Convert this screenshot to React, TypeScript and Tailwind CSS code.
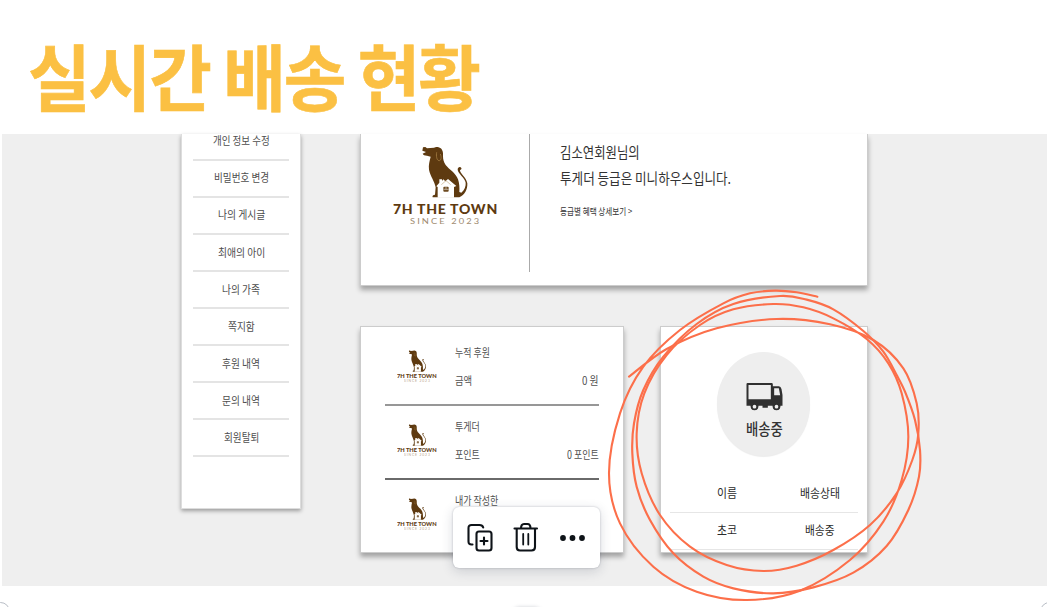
import { useLayoutEffect, useRef, useState } from 'react';

const KR = "font-['Noto_Sans_CJK_KR','Noto_Sans',sans-serif]";

/* Single line of text condensed or widened to an exact width. */
function Fit({ w, className = '', children }: { w: number; className?: string; children: string }) {
  const ref = useRef<HTMLSpanElement>(null);
  const [scale, setScale] = useState(1);
  useLayoutEffect(() => {
    if (ref.current) setScale(w / ref.current.offsetWidth);
  }, [w]);
  return (
    <span className={`block shrink-0 whitespace-nowrap ${className}`} style={{ width: w }}>
      <span ref={ref} className="inline-block origin-left" style={{ transform: `scaleX(${scale})` }}>
        {children}
      </span>
    </span>
  );
}

type Pt = [number, number];

function smooth(p: Pt[]) {
  let d = `M${p[0][0]} ${p[0][1]}`;
  for (let i = 0; i < p.length - 1; i++) {
    const a = p[i - 1] || p[i];
    const b = p[i];
    const c = p[i + 1];
    const e = p[i + 2] || c;
    d += `C${b[0] + (c[0] - a[0]) / 6} ${b[1] + (c[1] - a[1]) / 6} ${c[0] - (e[0] - b[0]) / 6} ${c[1] - (e[1] - b[1]) / 6} ${c[0]} ${c[1]}`;
  }
  return d;
}

const outer: Pt[] = [
  [652, 50], [590, 37], [525, 32], [450, 40], [370, 70], [240, 150], [130, 260], [60, 400], [27, 580], [60, 730],
  [160, 860], [290, 935], [440, 960], [600, 932], [750, 840], [850, 725], [905, 600], [925, 470], [905, 340],
  [865, 250], [800, 177], [700, 115], [610, 82], [520, 72],
];
const inner: Pt[] = [
  [87, 290], [200, 207], [350, 145], [530, 117], [690, 133], [820, 180], [910, 265], [950, 370], [955, 460],
  [937, 540], [890, 640], [810, 735], [700, 810], [590, 857], [490, 873], [380, 855], [270, 800], [180, 705],
  [125, 580], [110, 460], [133, 340], [200, 225], [300, 135], [400, 88], [520, 72],
];
const middle: Pt[] = [
  [890, 285], [850, 215], [790, 153], [700, 88], [620, 59], [540, 48], [400, 72], [290, 132], [190, 230],
  [130, 330], [102, 430], [97, 520], [110, 620], [150, 720], [220, 820], [310, 890], [400, 925], [520, 940],
  [640, 922], [760, 878], [860, 798], [925, 690], [957, 590], [960, 510], [945, 420], [915, 335], [890, 285],
];

function Scribble() {
  return (
    <svg className="absolute left-[600px] top-[280px]" width="330" height="327" viewBox="0 0 990 981" fill="none" stroke="#fc6f4a" strokeLinecap="round" strokeLinejoin="round">
      <path d={smooth([...outer, ...inner.slice(0, -1).reverse()])} strokeWidth="6.3" />
      <path d={smooth(middle)} strokeWidth="6.500" />
    </svg>
  );
}

function Dog({ className }: { className: string }) {
  return (
    <svg className={className} viewBox="120 48 150 156" preserveAspectRatio="none">
      <path
        d="M129 52 136 51 141 55 162 53C168 50 178 51 184 56C188 61 190 68 189 78C189 88 191 96 197 105C207 118 227 128 234 148C238 160 239 174 238 186L244 188C254 180 258 168 257 158C255 143 234 131 233 119C233 111 241 109 244 114C246 119 240 118 240 122C242 132 260 143 262 160C263 179 254 195 238 202L158 202C156 197 160 194 165 194L167 172C164 154 151 139 147 119C145 105 149 91 152 80L141 77C134 77 129 74 128 71L138 66 127 62Z"
        fill="#5e3a10"
      />
      <path d="M170 67C168 77 170 91 177 92C184 92 185 81 181 72" fill="none" stroke="#a47c42" strokeWidth="2.500" />
      <path d="M173 203V171L169 169 178 158V148H186V153L190 148 196 154 204 147 229 168 222 171V203Z" fill="#fff" />
      <path d="M184 164 198 152 212 164" fill="none" stroke="#c3aa85" strokeWidth="2" />
      <rect x="190" y="170" width="16" height="15" rx="3" fill="#6d4a20" />
      <path d="M198 171V178M191 178H206" stroke="#fff" strokeWidth="1.500" />
    </svg>
  );
}

const menu: [string, number][] = [
  ['개인 정보 수정', 57], ['비밀번호 변경', 55], ['나의 게시글', 47], ['최애의 아이', 47], ['나의 가족', 38],
  ['쪽지함', 27], ['후원 내역', 38], ['문의 내역', 38], ['회원탈퇴', 35],
];

const rows: { a: string; aw: number; b: string; bw: number; v: string; vw: number; line: string }[] = [
  { a: '누적 후원', aw: 35, b: '금액', bw: 17, v: '0 원', vw: 17, line: 'border-[#979797]' },
  { a: '투게더', aw: 25, b: '포인트', bw: 25, v: '0 포인트', vw: 32, line: 'border-[#6a6a6a]' },
  { a: '내가 작성한', aw: 43, b: '게시글', bw: 25, v: '0 개', vw: 17, line: 'border-transparent' },
];

function Truck() {
  return (
    <svg width="37" height="28" viewBox="0 0 110 84" fill="#303030">
      <path fillRule="evenodd" d="M4 0H76Q80 0 80 4V10H98Q104 10 106 18L109 36V68H103A12 12 0 0 1 79 68H65V74H49V68H37A12 12 0 0 1 13 68H1V4Q1 0 4 0ZM7 6V49H74V6ZM84 16V37H102L98 16Z" />
      <circle cx="25" cy="71" r="10.500" />
      <circle cx="25" cy="71" r="5.500" fill="#eee" />
      <circle cx="91" cy="71" r="10.500" />
      <circle cx="91" cy="71" r="5.500" fill="#eee" />
    </svg>
  );
}

export default function App() {
  return (
    <div className={`relative h-[607px] w-[1047px] overflow-hidden bg-white ${KR}`}>
      <header className="flex h-[134px] items-center pl-[28px]">
        <h1 className="mt-[13px] text-[72px] leading-[80px] font-bold tracking-[-0.03em] text-[#fbc043] [-webkit-text-stroke:0.6px_#fbc043]">
          <Fit w={451}>실시간 배송 현황</Fit>
        </h1>
      </header>

      <main className="ml-[2px] flex h-[452px] items-start bg-[#efefef]">
        <nav className="ml-[179px] h-[375px] w-[120px] border border-t-0 border-[#ddd] bg-white px-[11px] shadow-[0_2px_4px_rgba(0,0,0,0.35)]">
          <ul className="-mt-[10.500px]">
            {menu.map(([t, w]) => (
              <li key={t} className="flex h-[37.1px] items-center justify-center border-b-2 border-[#e4e4e4] text-[11.5px] leading-none text-[#4d4d4d]">
                <Fit w={w}>{t}</Fit>
              </li>
            ))}
          </ul>
        </nav>

        <div className="ml-[59px] w-[508px]">
          <section className="flex h-[152px] border-x border-b border-[#ccc] bg-white shadow-[0_4px_5px_rgba(0,0,0,0.32)]">
            <div className="flex h-[138px] w-[169px] flex-col items-center border-r border-[#aaa] pt-[12px]">
              <Dog className="h-[52px] w-[50px]" />
              <Fit w={105} className="mt-[4px] h-[14px] [font-family:Lato,sans-serif] text-[13.5px] leading-[14px] font-black tracking-[0.05em] text-[#5e3a10]">7H THE TOWN</Fit>
              <Fit w={71} className="mt-[1px] h-[8px] [font-family:Lato,sans-serif] text-[8px] leading-[8px] tracking-[1.8px] text-[#a08a70]">SINCE 2023</Fit>
            </div>
            <div className="pt-[5px] pl-[29.500px] text-[#333]">
              <Fit w={80} className="text-[15px] leading-[25.5px]">김소연회원님의</Fit>
              <Fit w={171} className="text-[15px] leading-[25.5px]">투게더 등급은 미니하우스입니다.</Fit>
              <Fit w={72} className="mt-[13px] text-[9.5px] leading-[16px]">{'등급별 혜택 상세보기 >'}</Fit>
            </div>
          </section>

          <div className="mt-[40px] flex justify-between">
            <section className="h-[227px] w-[264px] overflow-hidden border border-[#ccc] bg-white px-[24px] pt-[5px] shadow-[0_4px_5px_rgba(0,0,0,0.32)]">
              {rows.map((r) => (
                <div key={r.a} className={`flex h-[74px] border-b-2 pl-[12px] ${r.line}`}>
                  <div className="flex w-[40px] flex-col items-center pt-[18px]">
                    <Dog className="h-[22px] w-[19px]" />
                    <Fit w={40} className="mt-px h-[6px] [font-family:Lato,sans-serif] text-[6px] leading-[6px] font-black text-[#5e3a10]">7H THE TOWN</Fit>
                    <Fit w={27} className="h-[4px] [font-family:Lato,sans-serif] text-[4px] leading-[4px] tracking-[1px] text-[#b9a68c]">SINCE 2023</Fit>
                  </div>
                  <div className="flex flex-1 flex-col pt-[13px] pl-[18px] text-[11.5px] leading-[14px] text-[#505050]">
                    <Fit w={r.aw}>{r.a}</Fit>
                    <div className="mt-[14px] flex justify-between">
                      <Fit w={r.bw}>{r.b}</Fit>
                      <Fit w={r.vw}>{r.v}</Fit>
                    </div>
                  </div>
                </div>
              ))}
            </section>

            <section className="flex h-[227px] w-[208px] flex-col items-center border border-[#ccc] bg-white px-[9px] pt-[25px] shadow-[0_4px_5px_rgba(0,0,0,0.32)]">
              <div className="-ml-[2px] flex h-[104px] w-[93px] shrink-0 flex-col items-center rounded-[50%] bg-[#eee] pt-[30.500px] pl-[2px] shadow-[0_1px_1px_rgba(0,0,0,0.08)]">
                <Truck />
                <Fit w={37} className="mt-[7.500px] text-[15.5px] leading-[20px] font-medium text-[#333]">배송중</Fit>
              </div>
              <div className="mt-[19px] w-full text-[12.5px] leading-none text-[#2b2b2b]">
                <div className="flex h-[37.500px] items-center justify-between border-b border-[#e6e6e6] pr-[18px] pl-[47px]">
                  <Fit w={20}>이름</Fit>
                  <Fit w={40}>배송상태</Fit>
                </div>
                <div className="flex h-[37px] items-center justify-between border-b border-[#e6e6e6] pr-[23px] pl-[47px]">
                  <Fit w={20}>초코</Fit>
                  <Fit w={30}>배송중</Fit>
                </div>
              </div>
            </section>
          </div>
        </div>
      </main>

      <Scribble />

      <div className="absolute left-[453px] top-[507px] flex h-[61px] w-[147px] items-center rounded-[6px] bg-white shadow-[0_0_2px_rgba(40,50,70,0.3),0_3px_12px_rgba(40,50,70,0.18)]">
        <svg className="absolute left-[14px] top-[15.500px]" width="28" height="30" viewBox="0 0 28 30" fill="none" stroke="#0e1318" strokeWidth="2.100" strokeLinecap="round" strokeLinejoin="round">
          <path d="M5.500 21.500H4.500Q1.500 21.500 1.500 18.500V5Q1.500 2 4.500 2H12.500Q15.500 2 16.200 4.500" />
          <rect x="9.500" y="8.500" width="15" height="19" rx="2.500" />
          <path d="M17 14.500V21.500M13.500 18H20.500" />
        </svg>
        <svg className="absolute left-[60px] top-[15px]" width="26" height="31" viewBox="0 0 26 31" fill="none" stroke="#0e1318" strokeWidth="2.100" strokeLinecap="round">
          <path d="M1.500 6.500H24M8 6.500Q8 2 11 2H14.500Q17.500 2 17.500 6.500M3.700 7V25Q3.700 28.500 7 28.500H18.500Q22 28.500 22 25V7" />
          <path d="M10.200 12V22.500M15.300 12V22.500" strokeWidth="1.800" />
        </svg>
        <svg className="absolute left-[107px] top-[28px]" width="26" height="6" viewBox="0 0 26 6" fill="#0e1318">
          <circle cx="3" cy="3" r="2.900" />
          <circle cx="12.500" cy="3" r="2.900" />
          <circle cx="22" cy="3" r="2.900" />
        </svg>
      </div>

      <div className="absolute -left-[9px] top-[602px] size-[19px] rounded-full border-[1.5px] border-[#b9bec6] bg-white" />
      <div className="absolute left-[1040px] top-[602px] size-[19px] rounded-full border-[1.5px] border-[#b9bec6] bg-white" />
      <div className="absolute left-[514px] top-[608px] h-[10px] w-[26px] rounded-full bg-white shadow-[0_0_4px_rgba(40,50,70,0.35)]" />
    </div>
  );
}
